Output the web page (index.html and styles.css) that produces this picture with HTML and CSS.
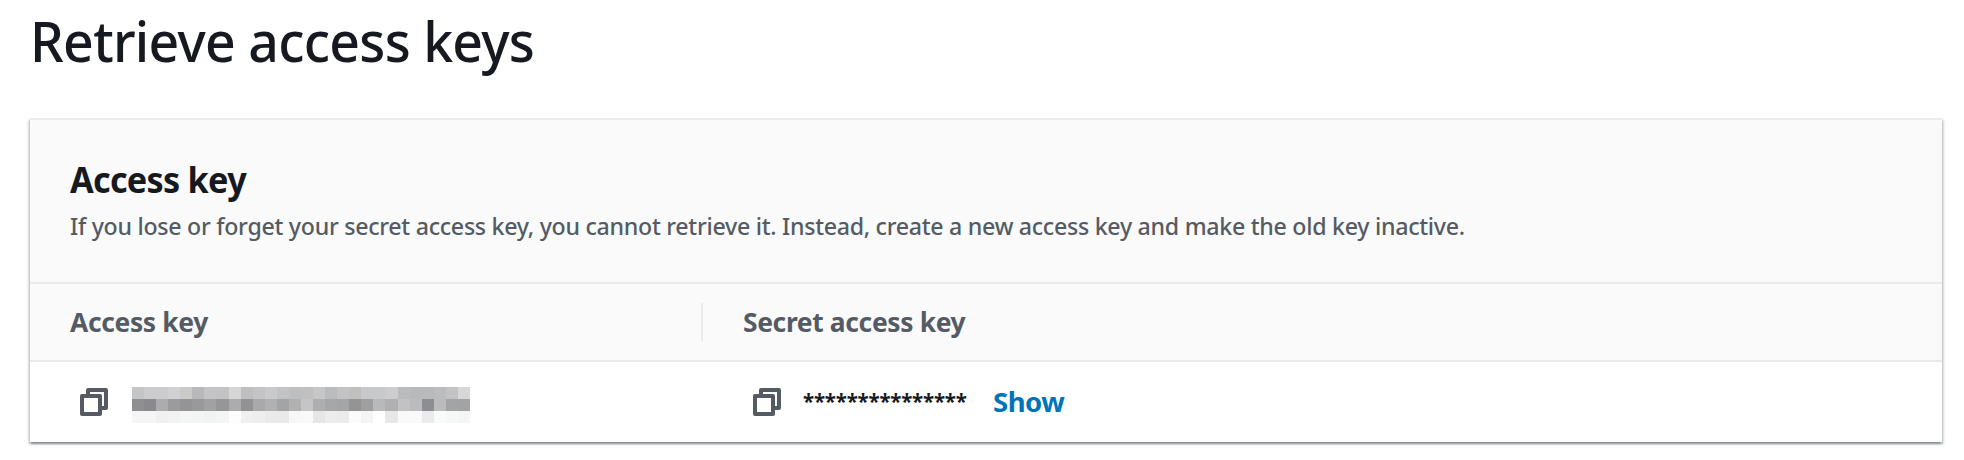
FILE: index.html
```html
<!DOCTYPE html>
<html lang="en">
<head>
<meta charset="utf-8">
<title>Retrieve access keys</title>
<link rel="stylesheet" href="styles.css">
</head>
<body>
<main class="page">
  <h1 class="page-title">Retrieve access keys</h1>
  <section class="card">
    <header class="card-header">
      <h2 class="card-title">Access key</h2>
      <p class="card-description">If you lose or forget your secret access key, you cannot retrieve it. Instead, create a new access key and make the old key inactive.</p>
    </header>
    <div class="row head-row">
      <div class="cell head-cell"><span class="head-label">Access key</span></div>
      <div class="cell head-cell"><span class="head-label">Secret access key</span></div>
    </div>
    <div class="row body-row">
      <div class="cell">
        <svg class="copy-icon" viewBox="0 0 28 28"><path d="M8 6V2H26V20H22"/><path d="M2 8H20V26H2Z"/></svg>
        <div class="mask" id="mask"></div>
      </div>
      <div class="cell">
        <svg class="copy-icon" viewBox="0 0 28 28"><path d="M8 6V2H26V20H22"/><path d="M2 8H20V26H2Z"/></svg>
        <span class="stars">***************</span>
        <a class="show-link">Show</a>
      </div>
    </div>
  </section>
</main>
<script src="mask.js"></script>
</body>
</html>
```
FILE: styles.css
```css
* { box-sizing: border-box; }
body {
  margin: 0;
  background: #fff;
  color: #16191f;
  font-family: "Noto Sans", "Open Sans", sans-serif;
}
.page { min-height: 460px; padding: 0 22px 0 30px; }
.page-title {
  margin: 0;
  height: 118px;
  padding-top: 3px;
  font-size: 55.5px;
  font-weight: 550;
  letter-spacing: -.75px;
  line-height: 76px;
  white-space: nowrap;
  transform: scaleX(.965);
  transform-origin: 0 0;
}
.card {
  background: #fff;
  border-top: 2px solid #eaeded;
  box-shadow: 0 2px 2px 0 rgba(0, 28, 36, .3), 2px 2px 2px 0 rgba(0, 28, 36, .15), -2px 2px 2px 0 rgba(0, 28, 36, .15);
}
.card-header {
  height: 162px;
  padding: 36px 40px 0;
  background: #fafafa;
  white-space: nowrap;
}
.card-title {
  margin: 0;
  font-size: 36px;
  font-weight: 700;
  letter-spacing: -.75px;
  line-height: 48px;
  transform: scaleX(.95);
  transform-origin: 0 0;
}
.card-description {
  margin: 4px 0 0;
  color: #545b64;
  font-size: 24px;
  font-weight: 500;
  letter-spacing: -.285px;
  line-height: 36px;
  transform: scaleX(.965);
  transform-origin: 0 0;
}
.row { display: grid; grid-template-columns: 673px 1fr; }
.cell { display: flex; align-items: center; }
.head-row {
  height: 80px;
  background: #fafafa;
  border-top: 2px solid #eaeaea;
  border-bottom: 2px solid #eaeaea;
  align-items: center;
}
.head-cell { height: 38px; padding: 0 0 2px 40px; }
.head-cell:first-child { border-right: 2px solid #eaeaea; }
.head-label {
  color: #545b64;
  font-size: 27.5px;
  font-weight: 700;
  letter-spacing: -.36px;
  white-space: nowrap;
  transform: scaleX(.96);
  transform-origin: 0 0;
}
.body-row { height: 80px; }
.body-row .cell { padding: 0 0 2px 50px; }
.copy-icon {
  width: 28px;
  height: 28px;
  margin-top: 2px;
  fill: none;
  stroke: #545b64;
  stroke-width: 4;
  stroke-linejoin: round;
}
.mask {
  display: grid;
  grid-template-columns: repeat(28, 1fr);
  grid-auto-rows: 12px;
  width: 338px;
  margin: 8px 0 0 24px;
}
.stars {
  width: 165px;
  margin: 0 0 0 22px;
  font-size: 20.5px;
  font-weight: 700;
  letter-spacing: -.2px;
}
.show-link {
  margin-left: 25px;
  color: #0073bb;
  font-size: 27.5px;
  font-weight: 700;
  letter-spacing: -.5px;
}
```
FILE: mask.js
```js
const rows = [
  "c4c5c7 cccccf cbcccd d1d1d4 cacac9 b8b8ba c4c4c6 c2c3c4 d6d6d6 bfbfc1 c4c4c6 cacacc c2c3c4 bdbec0 c0c0c1 c5c7c8 babbbd c3c3c5 bfbfbe c8c9ca c8c9ca cdcdcf babbbc b8b9ba b8b9ba bbbcbe c3c3c5 d5d8d6",
  "8f8f91 8a8a8e acacae 9b9b9e 949496 99999b a1a1a3 969698 acacae 929295 a9a9ab b1b1b3 a3a4a6 b1b1b2 c5c5c7 acaeaf a6a7a9 a4a5a7 949495 9f9fa1 b8b9bb b0b0b2 c2c2c4 babbbd 8d8e91 bbbbbd a3a4a5 a2a3a4",
  "f5f5f5 f5f5f5 f0f0f0 f2f2f2 f4f6f6 f3f4f4 f0f3f2 f4f5f5 fdfdfd f0f0f0 eeeeee eaeaea e9e9e9 f8f8f8 f9f9f9 e6e6e6 ededed ebebeb fbfbfb f4f4f4 ffffff e7e7e7 f9f9f9 fafafa ebebeb f9fafa f6f7f7 f4f6f6"
];
const mask = document.getElementById("mask");
for (const color of rows.join(" ").split(" ")) {
  const tile = document.createElement("i");
  tile.style.background = "#" + color;
  mask.append(tile);
}
```
